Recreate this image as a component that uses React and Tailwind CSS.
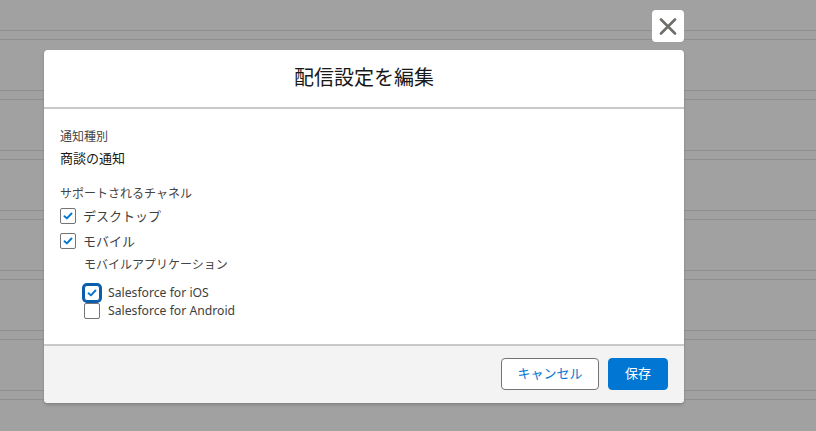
import React from "react";

const font = { fontFamily: "'Noto Sans', 'Noto Sans CJK JP', sans-serif" };

function Check() {
  return (
    <svg width="10" height="8" viewBox="0 0 10 8" className="block">
      <path d="M1.5 4.3 L3.9 6.4 L8.5 1.5" fill="none" stroke="#0176d3" strokeWidth="1.9" strokeLinecap="round" strokeLinejoin="round" />
    </svg>
  );
}

function Box({ checked, focus }) {
  return (
    <span
      className={
        focus
          ? "flex h-[16px] w-[16px] shrink-0 items-center justify-center rounded-[3px] border border-[#0b5cab] bg-white shadow-[0_0_0_2px_#0b5cab]"
          : "flex h-[16px] w-[16px] shrink-0 items-center justify-center rounded-[2px] border border-[#747474] bg-white"
      }
    >
      {checked ? <Check /> : null}
    </span>
  );
}

export default function App() {
  const rows = Array.from({ length: 8 });
  return (
    <div className="relative h-[431px] w-[816px] overflow-hidden bg-[#a1a1a1]" style={font}>
      <div className="flex flex-col">
        {rows.map((_, i) => (
          <div key={i} className="h-[60px] pt-[30px]">
            <div className="h-[10px] border-y border-[#8f8f8f]" />
          </div>
        ))}
      </div>

      <button className="absolute left-[652px] top-[10px] flex h-[32px] w-[32px] items-center justify-center rounded-[4px] bg-white">
        <svg width="18" height="17" viewBox="0 0 18 17">
          <path d="M2 1.5 L16 15.5 M16 1.5 L2 15.5" stroke="#706e6b" strokeWidth="2.6" strokeLinecap="round" />
        </svg>
      </button>

      <div className="absolute left-[44px] top-[50px] flex w-[640px] flex-col rounded-[4px] bg-white shadow-[0_2px_3px_rgba(0,0,0,0.18)]">
        <div className="flex h-[59px] items-center justify-center border-b-2 border-[#c9c9c9] pb-[2px]">
          <h2 className="text-[20px] leading-[28px] text-[#181818]">配信設定を編集</h2>
        </div>

        <div className="flex h-[235px] flex-col px-4 pt-[19px]">
          <div className="text-[12px] leading-[18px] text-[#444444]">通知種別</div>
          <div className="mt-[2px] text-[13px] leading-[20px] text-[#181818]">商談の通知</div>
          <div className="mt-[17px] text-[12px] leading-[18px] text-[#444444]">サポートされるチャネル</div>
          <div className="mt-[3px] flex h-[20px] items-center gap-[7px]">
            <Box checked />
            <span className="text-[13px] leading-[20px] text-[#3e3e3c]">デスクトップ</span>
          </div>
          <div className="mt-[5px] flex h-[20px] items-center gap-[7px]">
            <Box checked />
            <span className="text-[13px] leading-[20px] text-[#3e3e3c]">モバイル</span>
          </div>
          <div className="mt-[5px] pl-[24px] text-[12px] leading-[18px] text-[#444444]">モバイルアプリケーション</div>
          <div className="mt-[10px] flex h-[18px] items-center gap-[8px] pl-[24px]">
            <Box checked focus />
            <span className="text-[12.2px] leading-[18px] text-[#3e3e3c]">Salesforce for iOS</span>
          </div>
          <div className="flex h-[18px] items-center gap-[8px] pl-[24px]">
            <Box />
            <span className="text-[12.2px] leading-[18px] text-[#3e3e3c]">Salesforce for Android</span>
          </div>
        </div>

        <div className="flex h-[59px] items-center justify-end gap-[9px] rounded-b-[4px] border-t-2 border-[#c9c9c9] bg-[#f3f3f3] px-4 pb-[1px]">
          <button className="flex h-[32px] w-[98px] items-center justify-center rounded-[4px] border border-[#747474] bg-white text-[13px] text-[#0176d3]">
            キャンセル
          </button>
          <button className="flex h-[32px] w-[60px] items-center justify-center rounded-[4px] border border-[#0176d3] bg-[#0176d3] text-[13px] text-white">
            保存
          </button>
        </div>
      </div>
    </div>
  );
}
